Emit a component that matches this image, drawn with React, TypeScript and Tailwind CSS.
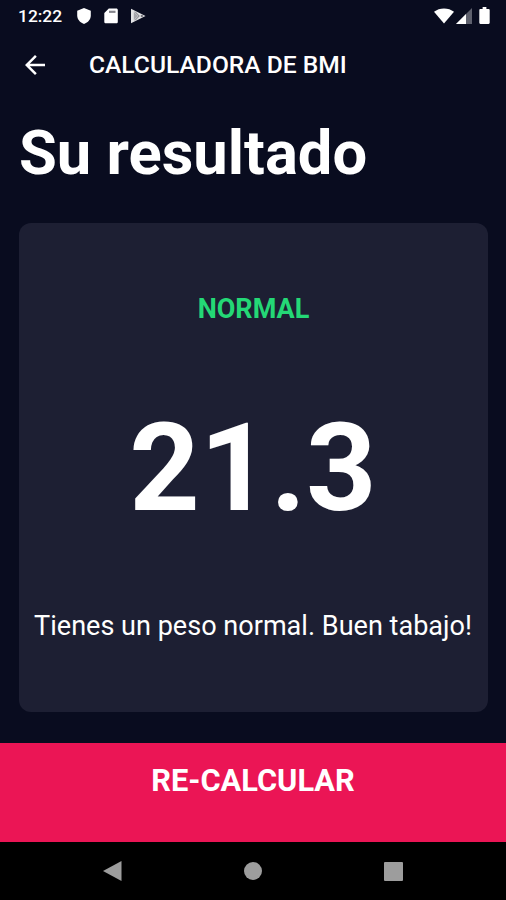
function StatusBar() {
  return (
    <div className="flex h-[30px] items-center justify-between pl-[18px] pr-[16.500px] pt-px">
      <div className="flex items-center">
        <span className="w-[59px] pt-[3px] text-[17.400px] font-medium leading-none">12:22</span>
        <svg className="h-4 w-[14px]" viewBox="0 0 14 16" fill="currentColor">
          <path d="M7 0l6.800 2.700v4.800c0 3.700-2.700 7-6.800 8.500-4.100-1.500-6.800-4.800-6.800-8.500V2.700z" />
        </svg>
        <svg className="ml-[13px] h-4 w-[14px]" viewBox="0 0 14 16" fill="currentColor">
          <path d="M4.800.5h7.400c1 0 1.600.6 1.600 1.500v11.700c0 1-.6 1.600-1.600 1.600H1.900c-1 0-1.600-.6-1.600-1.600V5z" />
          <path d="M5 2.700h6.500v2.200H5z" fill="#85858c" />
        </svg>
        <svg className="ml-3 h-4 w-4" viewBox="0 0 16 16">
          <path d="M1 .8v14.400L15.500 8z" fill="#e4e4e6" />
          <path d="M3.800 3.800v8.400L8.200 8z" fill="#a5a5ab" />
          <path d="M5 3.600L9.300 8 5 12.400" fill="none" stroke="#66666f" strokeWidth=".9" />
          <path d="M10.300 8l1.600-1.200L13.500 8l-1.600 1.200z" fill="#66666f" />
        </svg>
      </div>
      <div className="flex items-center">
        <svg className="h-4 w-5" viewBox="0 0 20 16" fill="currentColor">
          <path d="M0 3.800C2.800 1.600 6.200.4 10 .4s7.200 1.200 10 3.400L10 15.600z" />
        </svg>
        <svg className="ml-[2px] h-4 w-4" viewBox="0 0 16 16" fill="currentColor">
          <path d="M16 0v16H0z" opacity=".35" />
          <path d="M10 6v10H0z" />
        </svg>
        <svg className="mb-px ml-[7px] h-[17px] w-[11px]" viewBox="0 0 11 18" fill="currentColor">
          <path d="M3.500 0h4v2h2.300c.7 0 1.200.5 1.200 1.200v13.600c0 .7-.5 1.200-1.200 1.200H1.200C.5 18 0 17.500 0 16.800V3.200C0 2.500.5 2 1.200 2h2.300z" />
        </svg>
      </div>
    </div>
  )
}

function AppBar() {
  return (
    <header className="flex h-[69px] items-center pl-5">
      <button aria-label="Volver" className="flex h-[30px] w-[69px] items-center">
        <svg className="h-[30px] w-[30px]" viewBox="0 0 24 24" fill="currentColor">
          <path d="M20 11H7.830l5.590-5.590L12 4l-8 8 8 8 1.410-1.410L7.830 13H20v-2z" />
        </svg>
      </button>
      <h1 className="pt-[2px] text-[24.600px] font-medium leading-none">CALCULADORA DE BMI</h1>
    </header>
  )
}

function NavBar() {
  return (
    <nav className="flex h-[58px] items-center justify-between bg-black pl-[102px] pr-[103px]">
      <svg className="h-[22px] w-5" viewBox="0 0 20 22" fill="#9d9d9d">
        <path d="M19.500 1v20L1 11z" />
      </svg>
      <div className="h-[18px] w-[18px] rounded-full bg-[#9d9d9d]" />
      <div className="h-[19px] w-[19px] rounded-[1px] bg-[#9d9d9d]" />
    </nav>
  )
}

export default function App() {
  return (
    <div className="flex h-[900px] w-[506px] flex-col overflow-hidden bg-[#090c1f] font-[Roboto,sans-serif] text-white">
      <StatusBar />
      <AppBar />

      <main className="flex flex-1 flex-col px-[18.500px]">
        <h2 className="mt-[18px] h-[72px] whitespace-nowrap pl-[0.500px] text-[61.500px] font-bold leading-[72px]">
          Su resultado
        </h2>

        {/* Result card */}
        <section className="mt-[33.500px] flex h-[489.500px] flex-col items-center rounded-[12px] bg-[#1d1f33]">
          <p className="mt-[70px] pl-px text-[27px] font-bold leading-8 text-[#24d876]">NORMAL</p>
          <p className="mt-[71px] text-[123px] font-bold leading-[144px]">21.3</p>
          <p className="mt-[70px] whitespace-nowrap text-[27.070px] leading-8">
            Tienes un peso normal. Buen tabajo!
          </p>
        </section>
      </main>

      <button className="flex h-[99.500px] items-start justify-center bg-[#eb1555] pt-5 text-[30.800px] font-bold leading-9">
        RE-CALCULAR
      </button>
      <NavBar />
    </div>
  )
}
